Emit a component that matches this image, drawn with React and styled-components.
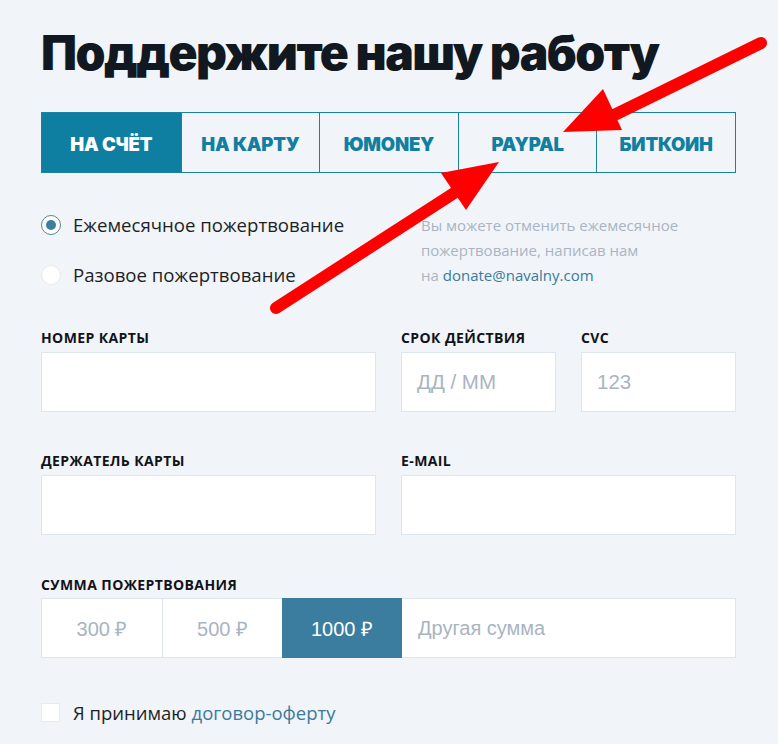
import React from "react";
import styled, { createGlobalStyle } from "styled-components";

const Global = createGlobalStyle`
  html, body { margin: 0; padding: 0; background: #f1f4f9; }
  body { font-family: "Open Sans", sans-serif; }
  * { box-sizing: border-box; }
`;

const Page = styled.div`
  position: relative;
  width: 778px;
  height: 744px;
  overflow: hidden;
  padding: 24px 0 0 41px;
`;

const Content = styled.div`
  width: 695px;
`;

const Title = styled.h1`
  margin: 0;
  font-family: Inter, sans-serif;
  font-weight: 900;
  font-size: 48px;
  line-height: 58px;
  letter-spacing: -1.5px;
  color: #111820;
`;

const Tabs = styled.div`
  display: grid;
  grid-template-columns: repeat(5, 1fr);
  margin-top: 30px;
  border: 1px solid #1a82a3;
  height: 61px;
`;

const Tab = styled.div`
  display: flex;
  align-items: center;
  justify-content: center;
  padding-top: 3px;
  font-family: Inter, sans-serif;
  font-weight: 900;
  font-size: 18.5px;
  letter-spacing: -0.2px;
  text-transform: uppercase;
  color: ${(p) => (p.$active ? "#ffffff" : "#117fa0")};
  background: ${(p) => (p.$active ? "#0f7fa1" : "transparent")};
  border-left: ${(p) => (p.$first ? "none" : "1px solid #1a82a3")};
`;

const RadioBlock = styled.div`
  display: grid;
  grid-template-columns: 380px 1fr;
  margin-top: 38px;
`;

const RadioList = styled.div`
  display: flex;
  flex-direction: column;
  gap: 25px;
  padding-top: 1px;
`;

const RadioRow = styled.label`
  display: flex;
  align-items: center;
  gap: 12px;
  font-size: 18.6px;
  line-height: 25px;
  color: #1d1f24;
`;

const RadioDot = styled.span`
  width: 20px;
  height: 20px;
  border-radius: 50%;
  background: #fff;
  border: 1px solid ${(p) => (p.$checked ? "#4f86a3" : "#e6ebf1")};
  display: flex;
  align-items: center;
  justify-content: center;
  flex: none;
  &::after {
    content: "";
    width: 10px;
    height: 10px;
    border-radius: 50%;
    background: ${(p) => (p.$checked ? "#3a7fa0" : "transparent")};
  }
`;

const Hint = styled.div`
  font-size: 15px;
  line-height: 25px;
  color: #a9b4c3;
  margin-top: 2px;
`;

const Link = styled.a`
  color: #3b7a9a;
  text-decoration: none;
`;

const FieldGrid = styled.div`
  display: grid;
  grid-template-columns: 335px 155px 155px;
  column-gap: 25px;
  row-gap: 40px;
  margin-top: 41px;
`;

const Field = styled.div`
  display: flex;
  flex-direction: column;
  gap: 5px;
  grid-column: ${(p) => p.$span || "auto"};
`;

const Label = styled.div`
  font-family: "Open Sans", sans-serif;
  font-weight: 700;
  font-size: 14px;
  line-height: 18px;
  letter-spacing: 0.4px;
  color: #111318;
  text-transform: uppercase;
`;

const Input = styled.div`
  height: 60px;
  background: #fff;
  border: 1px solid #dfe5ec;
  display: flex;
  align-items: center;
  padding-left: 15px;
  font-family: "Liberation Sans", Arial, sans-serif;
  font-size: 20.5px;
  color: #a9b4c3;
`;

const AmountSection = styled.div`
  margin-top: 41px;
  display: flex;
  flex-direction: column;
  gap: 4px;
`;

const AmountRow = styled.div`
  display: grid;
  grid-template-columns: 120px 120px 120px 1fr;
  height: 60px;
  background: #fff;
  border: 1px solid #dfe5ec;
`;

const AmountCell = styled.div`
  display: flex;
  align-items: center;
  justify-content: ${(p) => (p.$left ? "flex-start" : "center")};
  padding-left: ${(p) => (p.$left ? "16px" : "0")};
  font-family: "Liberation Sans", Arial, sans-serif;
  font-size: 20px;
  color: ${(p) => (p.$active ? "#ffffff" : "#a9b4c3")};
  background: ${(p) => (p.$active ? "#3a7d9e" : "#fff")};
  border-left: ${(p) => (p.$first || p.$active || p.$afterActive ? "none" : "1px solid #dfe5ec")};
  margin: ${(p) => (p.$active ? "-1px 0" : "0")};
`;

const Agree = styled.label`
  display: flex;
  align-items: center;
  gap: 13px;
  margin-top: 42px;
  font-size: 18.5px;
  color: #1d1f24;
`;

const Box = styled.span`
  width: 19px;
  height: 19px;
  background: #fff;
  border: 1px solid #e6ebf1;
  flex: none;
`;

const Overlay = styled.svg`
  position: absolute;
  left: 0;
  top: 0;
  pointer-events: none;
`;

const tabs = ["На счёт", "На карту", "ЮMoney", "PayPal", "Биткоин"];

export default function App() {
  return (
    <>
      <Global />
      <Page>
        <Content>
          <Title>Поддержите нашу работу</Title>
          <Tabs>
            {tabs.map((t, i) => (
              <Tab key={t} $active={i === 0} $first={i === 0}>
                {t}
              </Tab>
            ))}
          </Tabs>
          <RadioBlock>
            <RadioList>
              <RadioRow>
                <RadioDot $checked />
                Ежемесячное пожертвование
              </RadioRow>
              <RadioRow>
                <RadioDot />
                Разовое пожертвование
              </RadioRow>
            </RadioList>
            <Hint>
              Вы можете отменить ежемесячное
              <br />
              пожертвование, написав нам
              <br />
              на <Link>donate@navalny.com</Link>
            </Hint>
          </RadioBlock>
          <FieldGrid>
            <Field>
              <Label>Номер карты</Label>
              <Input />
            </Field>
            <Field>
              <Label>Срок действия</Label>
              <Input>ДД / ММ</Input>
            </Field>
            <Field>
              <Label>CVC</Label>
              <Input>123</Input>
            </Field>
            <Field>
              <Label>Держатель карты</Label>
              <Input />
            </Field>
            <Field $span="2 / span 2">
              <Label>E-mail</Label>
              <Input />
            </Field>
          </FieldGrid>
          <AmountSection>
            <Label>Сумма пожертвования</Label>
            <AmountRow>
              <AmountCell $first>300 ₽</AmountCell>
              <AmountCell>500 ₽</AmountCell>
              <AmountCell $active>1000 ₽</AmountCell>
              <AmountCell $left $afterActive>Другая сумма</AmountCell>
            </AmountRow>
          </AmountSection>
          <Agree>
            <Box />
            <span>
              Я принимаю <Link>договор-оферту</Link>
            </span>
          </Agree>
        </Content>
        <Overlay width="778" height="744" viewBox="0 0 778 744">
          <line x1="761" y1="43" x2="600" y2="122" stroke="#ff0000" strokeWidth="12" strokeLinecap="round" />
          <polygon points="563,132 603,89 622,130" fill="#ff0000" />
          <line x1="276" y1="308" x2="465" y2="186" stroke="#ff0000" strokeWidth="12" strokeLinecap="round" />
          <polygon points="499,162 441,173 466,210" fill="#ff0000" />
        </Overlay>
      </Page>
    </>
  );
}
